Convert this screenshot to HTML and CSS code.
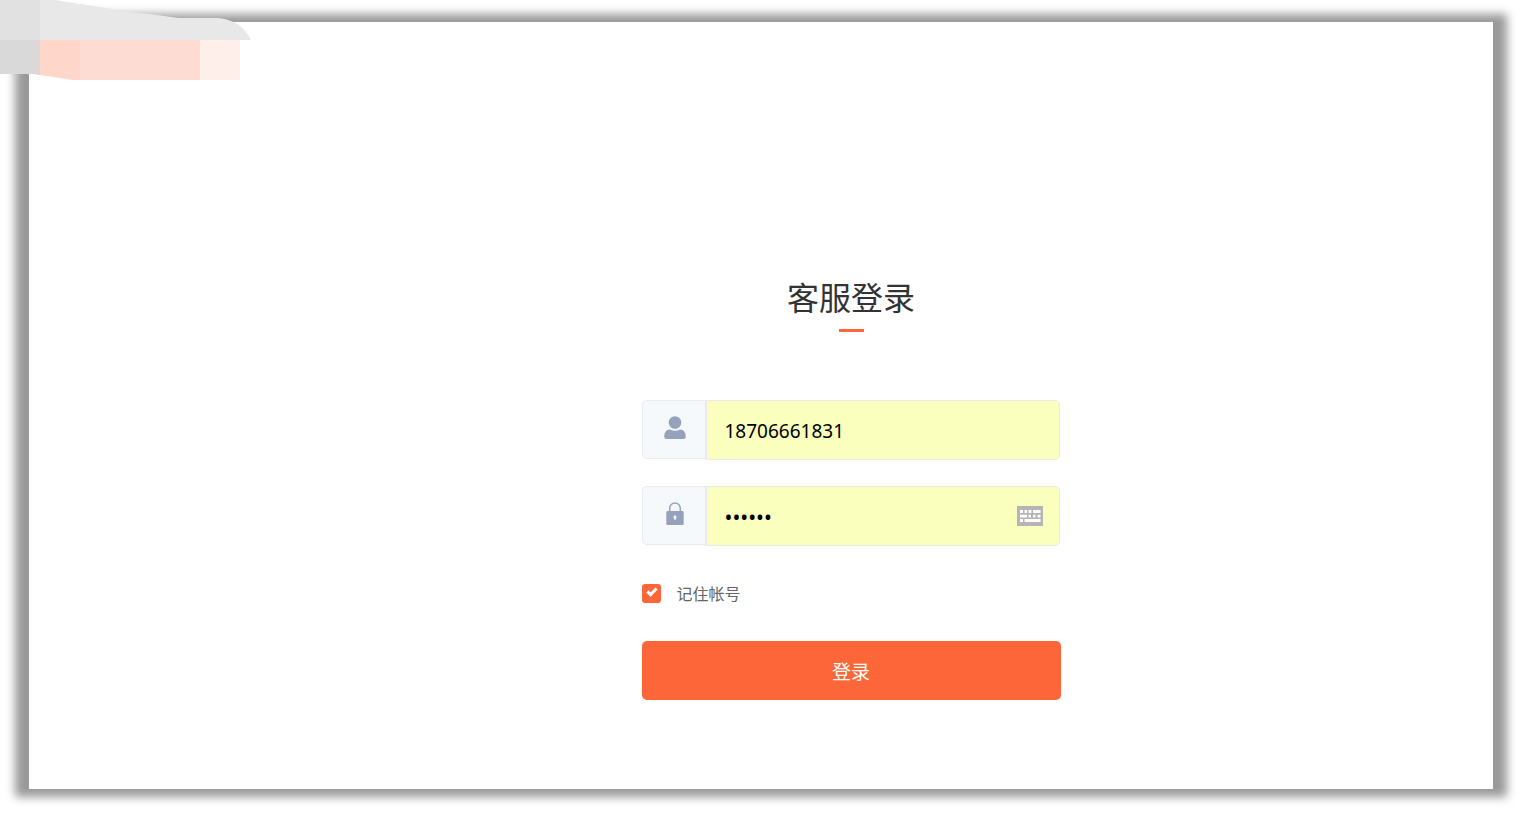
FILE: index.html
```
<!DOCTYPE html>
<html lang="zh-CN">
<head>
    <meta charset="UTF-8">
    <meta name="viewport" content="width=device-width, initial-scale=1.0">
    <title>客服登录</title>
    <link rel="stylesheet" href="styles.css">
</head>
<body>
    <svg class="corner-mark" width="252" height="80" viewBox="0 0 252 80" aria-hidden="true">
        <path fill="#e8e8e8" d="M40 0H55L80 4L100 7L130 12L150 14L178 18H218Q241 20 251 40H40Z"/>
        <path fill="#e1e1e1" d="M0 0H40V40H0Z"/>
        <path fill="#d9d9d9" d="M0 40H40V75L33 74H0Z"/>
        <path fill="#ffd6ca" d="M40 40H80V80H73L40 75Z"/>
        <path fill="#fdddd3" d="M80 40H200V80H80Z"/>
        <path fill="#feefeb" d="M200 40H240V80H200Z"/>
    </svg>

    <main class="panel">
        <form class="login-form">
            <h1 class="title">客服登录</h1>

            <div class="field">
                <label class="field-icon" for="account" aria-label="帐号">
                    <svg width="22" height="23" viewBox="0 0 22 23">
                        <circle cx="11" cy="6.5" r="6.3"/>
                        <path d="M6 13.5Q11 16 16 13.5C20 13.5 21.8 17 21.8 20.5Q21.8 23 19.5 23H2.5Q.2 23 .2 20.5C.2 17 2 13.5 6 13.5Z"/>
                    </svg>
                </label>
                <input class="field-input" type="text" id="account" value="18706661831">
            </div>

            <div class="field">
                <label class="field-icon" for="password" aria-label="密码">
                    <svg width="18" height="23" viewBox="0 0 18 23">
                        <path class="shackle" d="M3.7 10V6.2a5.3 5.3 0 0 1 10.6 0V10"/>
                        <path fill-rule="evenodd" d="M1.5 9H16.5Q17.7 9 17.7 10.2V21.8Q17.7 23 16.5 23H1.5Q.3 23 .3 21.8V10.2Q.3 9 1.5 9ZM9 13.6a1.5 1.5 0 0 0-.8 2.8v1.4h1.6v-1.4A1.5 1.5 0 0 0 9 13.6Z"/>
                    </svg>
                </label>
                <input class="field-input" type="password" id="password" value="123456">
                <button class="keyboard" type="button" aria-label="软键盘">
                    <svg width="26" height="20" viewBox="0 0 26 20">
                        <path fill="#b5b5b5" d="M0 0H26V20H0Z"/>
                        <path fill="#fff" d="M3 4h3v3H3zM7.5 4h2.5v3H7.5zM11.5 4h3v3h-3zM16 4h7.5v3H16zM3 8.8h7v2.7H3zM11.5 8.8h2.5v2.7h-2.5zM16 8.8h2.5v2.7H16zM20.5 8.8h3v2.7h-3zM3 13h3v3H3zM7.5 13h16v3h-16z"/>
                    </svg>
                </button>
            </div>

            <label class="remember">
                <input type="checkbox" checked>
                <span>记住帐号</span>
            </label>

            <button class="submit" type="submit">登录</button>
        </form>
    </main>
</body>
</html>
```
FILE: styles.css
```
* {
    margin: 0;
    padding: 0;
    box-sizing: border-box;
}

body {
    display: flex;
    min-height: 100vh;
    padding: 22px 30px 24px 29px;
    background-color: #fff;
    font-family: "Noto Sans", "Noto Sans CJK SC", sans-serif;
    color: #333;
}

.corner-mark {
    position: absolute;
    top: 0;
    left: 0;
    z-index: 2;
}

.panel {
    position: relative;
    z-index: 0;
    flex: 1;
    display: flex;
    justify-content: center;
    padding: 250px 0 80px 180px;
}

/* soft grey edge, wider at the sides than at the top and bottom */
.panel::before {
    content: "";
    position: absolute;
    inset: -8px -14px;
    z-index: -2;
    background-color: #999;
    filter: blur(5px);
}

.panel::after {
    content: "";
    position: absolute;
    inset: 0;
    z-index: -1;
    background-color: #fff;
}

.login-form {
    width: 100%;
    max-width: 419px;
}

.title {
    margin-bottom: 68px;
    font-size: 32px;
    font-weight: 400;
    line-height: 48px;
    text-align: center;
    font-family: "Noto Sans CJK SC", sans-serif;
}

.title::after {
    content: "";
    display: block;
    width: 25px;
    height: 3px;
    margin: 9px auto 0;
    background-color: #fc6638;
}

.field {
    position: relative;
    display: flex;
    align-items: flex-start;
    margin-bottom: 26px;
    padding-right: 1px;
}

.field-icon {
    display: flex;
    justify-content: center;
    width: 63px;
    height: 59px;
    padding: 15px 0 0 2px;
    border: 1px solid #e9ebf0;
    border-right: 0;
    border-radius: 5px 0 0 5px;
    background-color: #f5f9fc;
    fill: #94a2bc;
}

.shackle {
    fill: none;
    stroke: #94a2bc;
    stroke-width: 1.5;
}

.field-input {
    flex: 1;
    min-width: 0;
    height: 60px;
    padding: 2px 18px 0;
    border: 1px solid #e9ebf0;
    border-left-width: 2px;
    border-radius: 0 5px 5px 0;
    outline: none;
    background-color: #faffbd;
    color: #000;
    font-family: inherit;
    font-size: 19px;
}

.field-input[type="password"] {
    font-size: 21px;
}

.keyboard {
    position: absolute;
    top: 20px;
    right: 18px;
    border: 0;
    background: none;
    cursor: pointer;
}

.keyboard svg {
    display: block;
}

.remember {
    display: flex;
    align-items: center;
    gap: 16px;
    height: 24px;
    margin: 35px 0 36px;
    font-size: 16px;
    font-family: "Noto Sans CJK SC", sans-serif;
    color: #666;
}

.remember input {
    appearance: none;
    width: 19px;
    height: 19px;
    border-radius: 3px;
    background-color: #fc6638;
}

.remember input:checked::before {
    content: "";
    display: block;
    width: 7px;
    height: 3px;
    margin: 4px 5px;
    border: solid #fff;
    border-width: 0 0 3px 3px;
    transform: rotate(-45deg);
}

.submit {
    display: block;
    width: 100%;
    height: 59px;
    border: 0;
    border-radius: 5px;
    background-color: #fc6638;
    color: #fff;
    font-family: "Noto Sans CJK SC", sans-serif;
    font-size: 19px;
    cursor: pointer;
}
```
